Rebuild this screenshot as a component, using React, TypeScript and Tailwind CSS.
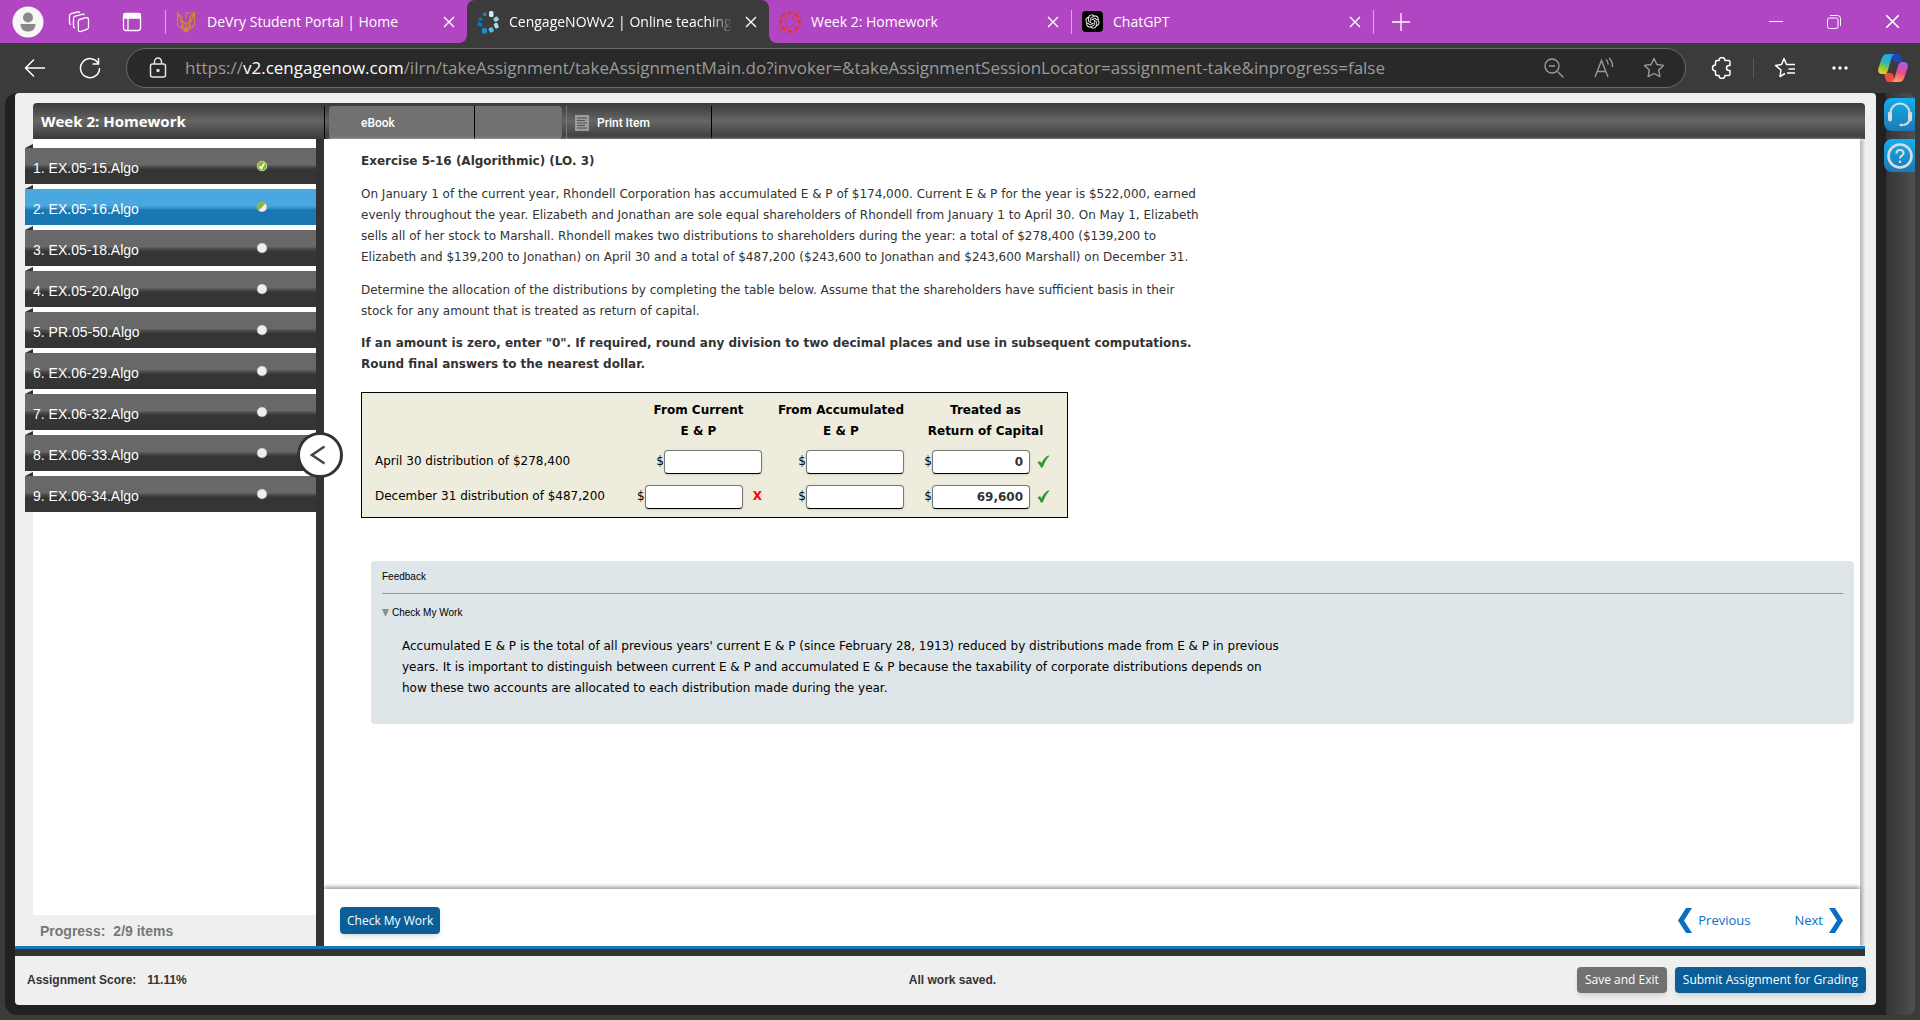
import { useState } from 'react'
import { RiOpenaiFill } from 'react-icons/ri'

const UI_FONT = "font-['Open_Sans','Noto_Sans',sans-serif]"
const ARIAL = "font-['Liberation_Sans',Arial,sans-serif]"
const VERDANA = "font-['DejaVu_Sans',Verdana,sans-serif]"

interface NavItem {
  label: string
  status: 'done' | 'partial' | 'none'
}

const items: NavItem[] = [
  { label: 'EX.05-15.Algo', status: 'done' },
  { label: 'EX.05-16.Algo', status: 'partial' },
  { label: 'EX.05-18.Algo', status: 'none' },
  { label: 'EX.05-20.Algo', status: 'none' },
  { label: 'PR.05-50.Algo', status: 'none' },
  { label: 'EX.06-29.Algo', status: 'none' },
  { label: 'EX.06-32.Algo', status: 'none' },
  { label: 'EX.06-33.Algo', status: 'none' },
  { label: 'EX.06-34.Algo', status: 'none' },
]

/* ---------- icons ---------- */

function CloseIcon({ size = 12 }: { size?: number }) {
  return (
    <svg width={size} height={size} viewBox="0 0 12 12" fill="none" stroke="currentColor" strokeWidth="1.4">
      <path d="M1 1l10 10M11 1L1 11" />
    </svg>
  )
}

function DevryIcon() {
  return (
    <svg width="20" height="22" viewBox="0 0 20 22" fill="none" stroke="#d08a2e" strokeWidth="1.2">
      <path d="M1.500 2v12l8.500 7 8.500-7V2L14 6v4l-4 3-4-3V6zM6 10v8M14 10v8M10 13v8M1.500 2l8.500 19M18.500 2L10 21M10 8V2h8.500" />
    </svg>
  )
}

function CengageIcon() {
  return (
    <svg width="22" height="24" viewBox="0 0 22 24">
      <rect x="12" y="1" width="4.500" height="6" rx="1.500" fill="#cfe9f5" />
      <rect x="16.500" y="7" width="5" height="4.500" rx="1.500" fill="#8fd0ea" transform="rotate(-35 19 9)" />
      <rect x="17" y="13" width="4" height="5.500" rx="1.500" fill="#a9dcee" transform="rotate(-20 19 15)" />
      <rect x="12" y="17.500" width="4.500" height="5" rx="1.500" fill="#5bb8e0" transform="rotate(-30 14 20)" />
      <rect x="5" y="18" width="5" height="5.500" rx="1.500" fill="#1b8fd0" />
      <rect x="0.500" y="12.500" width="5" height="4" rx="1.500" fill="#0f75b8" transform="rotate(25 3 14)" />
      <rect x="1.500" y="7.500" width="4" height="3.500" rx="1" fill="#1a6aa8" />
      <rect x="6" y="2.500" width="3.500" height="3.500" rx="1" fill="#2d7fb5" />
    </svg>
  )
}

function CanvasIcon() {
  const angles = [0, 45, 90, 135, 180, 225, 270, 315]
  return (
    <svg width="22" height="22" viewBox="-11 -11 22 22" fill="#e73429">
      {angles.map((a) => (
        <g key={a} transform={`rotate(${a})`}>
          <path d="M-3.200 -10.200A10.600 10.600 0 0 1 3.200 -10.200A3.300 3.300 0 0 1 -3.200 -10.200Z" />
          <circle cx="0" cy="-5.200" r="0.900" />
        </g>
      ))}
    </svg>
  )
}

function CopilotIcon() {
  return (
    <svg width="30" height="28" viewBox="0 0 30 28">
      <defs>
        <linearGradient id="cpA" x1="0.600" y1="0" x2="0.300" y2="1">
          <stop offset="0" stopColor="#1fa4f2" />
          <stop offset="0.400" stopColor="#2bb3b8" />
          <stop offset="0.700" stopColor="#8cc63f" />
          <stop offset="1" stopColor="#f5d01e" />
        </linearGradient>
        <linearGradient id="cpB" x1="0.600" y1="0" x2="0.400" y2="1">
          <stop offset="0" stopColor="#a35cf5" />
          <stop offset="0.500" stopColor="#ec4a8c" />
          <stop offset="1" stopColor="#ffa14a" />
        </linearGradient>
      </defs>
      <path d="M13 0h6c2 0 3 1 3.500 3l1.500 5h-6l-3-1z" fill="#1747c8" />
      <path d="M17 28h-6c-2 0-3-1-3.500-3L6 19h6l3 1z" fill="#f0503a" />
      <path d="M9 0h8c-2 0-3 2-3.500 4L10 16c-1 3-2 4-4 4H4c-3 0-4.500-2-3.500-6L3.500 5C4.500 2 6 0 9 0z" fill="url(#cpA)" />
      <path d="M21 28h-8c2 0 3-2 3.500-4L20 12c1-3 2-4 4-4h2c3 0 4.500 2 3.500 6l-3 9c-1 3-2.500 5-5.500 5z" fill="url(#cpB)" />
    </svg>
  )
}

function StatusIcon({ status }: { status: NavItem['status'] }) {
  return (
    <svg width="12" height="12" viewBox="0 0 12 12">
      <circle cx="6" cy="6" r="5" fill="#eee" stroke="#8a8a8a" strokeWidth="0.500" />
      {status === 'done' && (
        <>
          <circle cx="6" cy="6" r="4.700" fill="#86b82d" stroke="#c9dba4" strokeWidth="0.600" />
          <path d="M3.500 6.200l1.800 2.200 3-5" fill="none" stroke="#fff" strokeWidth="1.700" />
        </>
      )}
      {status === 'partial' && <path d="M2.600 9.400A4.800 4.800 0 0 1 9.400 2.600z" fill="#86b82d" />}
    </svg>
  )
}

function CheckMark() {
  return (
    <svg width="13" height="13" viewBox="0 0 13 13">
      <path d="M.500 7.500L3 6l1.500 2.200C6 5 8 2 11 .500l1.500.300C9.500 4 7.500 8 5.700 12.500H3.800C3 10.500 2 9 .500 7.500z" fill="#2e9a33" />
    </svg>
  )
}

/* ---------- browser chrome ---------- */

interface TabProps {
  title: string
  icon: React.ReactNode
  active?: boolean
  divider?: boolean
}

function BrowserTab({ title, icon, active, divider }: TabProps) {
  return (
    <div
      className={`relative flex h-[43px] w-[302px] min-w-0 items-center pl-2.5 pr-3 ${
        active ? 'rounded-t-lg bg-[#3b3b3b]' : ''
      }`}
    >
      {divider && <span className="absolute left-0 top-2.5 h-6 w-px bg-[#dba6e3]" />}
      <span className="flex w-[22px] shrink-0 justify-center">{icon}</span>
      <span
        className={`ml-2.5 flex-1 overflow-hidden whitespace-nowrap text-sm text-white ${
          active ? '[mask-image:linear-gradient(to_right,black_90%,transparent)]' : ''
        }`}
      >
        {title}
      </span>
      <button aria-label={`Close ${title}`} className="ml-3 shrink-0 text-white">
        <CloseIcon />
      </button>
      {active && (
        <>
          <span className="absolute bottom-0 -left-2 size-2 bg-[#3b3b3b]">
            <span className="block size-2 rounded-br-lg bg-[#b146c2]" />
          </span>
          <span className="absolute -right-2 bottom-0 size-2 bg-[#3b3b3b]">
            <span className="block size-2 rounded-bl-lg bg-[#b146c2]" />
          </span>
        </>
      )}
    </div>
  )
}

function TabStrip() {
  return (
    <div className="flex h-[43px] items-center bg-[#b146c2] text-white">
      <div className="flex w-[165px] shrink-0 items-center pl-3">
        <button aria-label="Profile">
          <svg width="32" height="32" viewBox="0 0 32 32">
            <circle cx="16" cy="16" r="15.500" fill="#f7f7f7" />
            <circle cx="16" cy="11.500" r="5" fill="#8a8a8a" />
            <path d="M8.500 18h15c0 5-3 7.500-7.500 7.500S8.500 23 8.500 18z" fill="#8a8a8a" />
          </svg>
        </button>
        <button aria-label="Workspaces" className="ml-6">
          <svg width="22" height="22" viewBox="0 0 22 22" fill="none" stroke="#fff" strokeWidth="1.300" strokeLinejoin="round">
            <path d="M11.500 8.500l6.500-1.800c1.500-.4 2.500.3 2.500 1.800v7.500c0 1.200-.5 2-1.700 2.400l-5.800 2c-1.500.5-2.700-.2-2.700-1.700v-8c0-1.200.3-1.900 1.200-2.200z" />
            <path d="M7 17c-1 0-1.500-.8-1.500-2V7.500c0-1.200.5-2 1.700-2.300L14 3.300c1.200-.3 2 .1 2.300.9" />
            <path d="M3 13.500c-1 0-1.500-.8-1.500-2V5c0-1.200.5-2 1.700-2.300L9.500 1c1.200-.3 2 .1 2.300.9" />
          </svg>
        </button>
        <button aria-label="Tab actions" className="ml-8">
          <svg width="20" height="20" viewBox="0 0 20 20" fill="none" stroke="#fff" strokeWidth="1.300">
            <rect x="1.500" y="1.500" width="17" height="17" rx="2.500" />
            <path d="M2 2h16v4H2z" fill="#fff" />
            <path d="M6 6v12" />
          </svg>
        </button>
      </div>
      <BrowserTab title="DeVry Student Portal | Home" icon={<DevryIcon />} divider />
      <BrowserTab title="CengageNOWv2 | Online teaching" icon={<CengageIcon />} active />
      <BrowserTab title="Week 2: Homework" icon={<CanvasIcon />} />
      <BrowserTab
        title="ChatGPT"
        divider
        icon={
          <span className="flex size-[21px] items-center justify-center rounded bg-black">
            <RiOpenaiFill size={17} />
          </span>
        }
      />
      <button aria-label="New tab" className="flex h-6 items-center border-l border-[#dba6e3] pl-4.5">
        <svg width="18" height="18" viewBox="0 0 18 18" stroke="#fff" strokeWidth="1.300">
          <path d="M9 0v18M0 9h18" />
        </svg>
      </button>
      <div className="ml-auto flex items-center gap-11 pr-5">
        <button aria-label="Minimize">
          <svg width="14" height="14" viewBox="0 0 14 14" stroke="#fff">
            <path d="M0 6.500h14" />
          </svg>
        </button>
        <button aria-label="Restore">
          <svg width="14" height="14" viewBox="0 0 14 14" fill="none" stroke="#fff">
            <rect x="0.500" y="3" width="10.500" height="10.500" rx="2" />
            <path d="M3 .500h7.500a3 3 0 0 1 3 3V11" />
          </svg>
        </button>
        <button aria-label="Close window">
          <CloseIcon size={15} />
        </button>
      </div>
    </div>
  )
}

function AddressBar() {
  return (
    <div className="flex h-[50px] items-center bg-[#3b3b3b] pl-6 pr-3 text-white">
      <button aria-label="Back">
        <svg width="22" height="20" viewBox="0 0 22 20" fill="none" stroke="#fff" strokeWidth="1.500">
          <path d="M10 1.500L1.500 10l8.500 8.500M1.500 10H21" />
        </svg>
      </button>
      <button aria-label="Refresh" className="ml-8">
        <svg width="24" height="22" viewBox="0 0 24 22" fill="none" stroke="#fff" strokeWidth="1.500">
          <path d="M20.300 6.500A9.500 9.500 0 1 0 21.500 11M20.500 1v6h-6" />
        </svg>
      </button>
      <div className="ml-6 flex h-10 min-w-0 flex-1 items-center rounded-full border border-[#6a6a6a] bg-[#292929] px-5">
        <svg width="22" height="22" viewBox="0 0 22 22" className="shrink-0" fill="none" stroke="#e4e4e4" strokeWidth="1.500">
          <rect x="3.500" y="7" width="15" height="13" rx="2" />
          <path d="M7.500 7V4.500a3.500 3.500 0 0 1 7 0V7" />
          <circle cx="11" cy="13.500" r="1" fill="#e4e4e4" />
        </svg>
        <span className="ml-4 flex-1 overflow-hidden whitespace-nowrap text-[17px] text-[#9a9a9a]">
          https://<span className="text-white">v2.cengagenow.com</span>
          /ilrn/takeAssignment/takeAssignmentMain.do?invoker=&amp;takeAssignmentSessionLocator=assignment-take&amp;inprogress=false
        </span>
        <div className="flex shrink-0 items-center gap-7">
          <button aria-label="Zoom out">
            <svg width="22" height="22" viewBox="0 0 22 22" fill="none" stroke="#9a9a9a" strokeWidth="1.400">
              <circle cx="9" cy="9" r="7" />
              <path d="M14.500 14.500l6 6M6 9h6" />
            </svg>
          </button>
          <button aria-label="Read aloud">
            <svg width="22" height="22" viewBox="0 0 22 22" fill="none" stroke="#9a9a9a" strokeWidth="1.400">
              <path d="M2 20L8.500 3.500 15 20M4.300 14.500h8.400M13 2.500c1.500 1.300 2.200 3 2.200 5M16 1c2.300 2 3.700 5 3.500 9" />
            </svg>
          </button>
          <button aria-label="Add to favorites">
            <svg width="22" height="22" viewBox="0 0 22 22" fill="none" stroke="#9a9a9a" strokeWidth="1.400" strokeLinejoin="round">
              <path d="M11 1.500l2.900 6 6.600.9-4.800 4.600 1.200 6.600L11 16.500l-5.900 3.100 1.200-6.600L1.500 8.400l6.600-.9z" />
            </svg>
          </button>
        </div>
      </div>
      <div className="flex shrink-0 items-center pl-[25px]">
        <button aria-label="Extensions">
          <svg width="22" height="22" viewBox="0 0 22 22" fill="none" stroke="#fff" strokeWidth="1.500" strokeLinejoin="round">
            <path d="M8 3.500a3 3 0 0 1 6 0h3.500c.8 0 1.500.7 1.500 1.500v3.500h-1a2.500 2.500 0 0 0 0 5h1V17c0 .8-.7 1.500-1.500 1.500H14a3 3 0 0 1-6 0H6c-.8 0-1.500-.7-1.500-1.500v-3a3 3 0 0 1 0-6V5c0-.8.7-1.500 1.500-1.500z" />
          </svg>
        </button>
        <span className="mx-5 h-5 w-px bg-[#5a5a5a]" />
        <button aria-label="Favorites">
          <svg width="22" height="22" viewBox="0 0 22 22" fill="none" stroke="#fff" strokeWidth="1.500" strokeLinejoin="round">
            <path d="M11 16.500l-5 3 1-6.500L1.500 8.400l6-.9L10 1.500l2.600 6H21M14.500 12H21M13 16h8" />
          </svg>
        </button>
        <button aria-label="Settings and more" className="ml-9">
          <svg width="16" height="4" viewBox="0 0 16 4" fill="#fff">
            <circle cx="2" cy="2" r="1.700" />
            <circle cx="8" cy="2" r="1.700" />
            <circle cx="14" cy="2" r="1.700" />
          </svg>
        </button>
        <button aria-label="Copilot" className="ml-[30px]">
          <CopilotIcon />
        </button>
      </div>
    </div>
  )
}

/* ---------- assignment page ---------- */

function AssignmentHeader() {
  return (
    <header className="flex h-9 items-stretch rounded-t bg-linear-to-b from-[#3a3a3a] via-[#666] to-[#3a3a3a] text-white">
      <h1 className={`w-[291px] shrink-0 pl-2 text-[15px] leading-9 font-bold ${UI_FONT}`}>Week 2: Homework</h1>
      <div className="mt-[3px] flex border-l border-black pl-1 font-['Roboto',sans-serif] text-xs font-medium">
        <div className="flex overflow-hidden rounded bg-[#717171] shadow">
          <button className="w-[146px] border-r border-black pr-6 pl-8 text-left">eBook</button>
          <span className="w-[87px]" />
        </div>
        <button className="ml-1 flex w-[146px] items-center gap-2 border-r border-l border-r-black border-l-[#777] pl-2">
          <svg width="14" height="16" viewBox="0 0 14 16">
            <rect width="14" height="16" fill="#9b9b9b" />
            <path d="M2 3h10M2 5.500h8M2 8h10M2 10.500h8M2 13h10" stroke="#555" />
          </svg>
          Print Item
        </button>
      </div>
    </header>
  )
}

function Sidebar() {
  const [selected, setSelected] = useState(1)

  return (
    <nav className="relative flex w-[291px] shrink-0 flex-col border-r-8 border-[#323232] bg-white">
      <ul className={`-ml-2 flex flex-col gap-[5px] pt-[9px] ${ARIAL}`}>
        {items.map((item, i) => (
          <li key={item.label} className="relative">
            <span className="absolute -top-1 left-0 h-1 w-2 bg-[#333] [clip-path:polygon(0_100%,100%_0,100%_100%)]" />
            <button
              onClick={() => setSelected(i)}
              className={`flex h-9 w-full items-center pl-2 text-sm text-white ${
                selected === i
                  ? 'bg-[linear-gradient(#49a8e0_0_46%,#2f8fca_54%,#1978b3_58%_100%)]'
                  : 'bg-[linear-gradient(#686868_0_46%,#4c4c4c_52%,#353535_60%_100%)]'
              }`}
            >
              <span className="flex-1 pt-1 text-left">
                {i + 1}. {item.label}
              </span>
              <span className="mr-12">
                <StatusIcon status={item.status} />
              </span>
            </button>
          </li>
        ))}
      </ul>
      <div className={`mt-auto flex h-[31px] items-center gap-2 bg-[#efefef] pl-[7px] text-sm font-bold text-[#777] ${ARIAL}`}>
        <span>Progress:</span>
        <span>2/9 items</span>
      </div>
      <button
        aria-label="Collapse navigation"
        className="absolute top-[293px] -right-[27px] z-10 flex size-[46px] items-center justify-center rounded-full border-3 border-[#333] bg-white"
      >
        <svg width="16" height="20" viewBox="0 0 16 20" className="mr-1" fill="none" stroke="#444" strokeWidth="2.500">
          <path d="M14.500 1.500L2 10l12.500 8.500" />
        </svg>
      </button>
    </nav>
  )
}

interface AmountProps {
  label: string
  value?: string
  mark?: 'ok' | 'bad'
}

function Amount({ label, value = '', mark }: AmountProps) {
  return (
    <div className="flex items-center justify-end">
      <span>$</span>
      <input
        aria-label={label}
        defaultValue={value}
        className="h-6 w-[98px] rounded border border-[#767676] border-b-black bg-white px-1.5 text-right text-xs font-bold text-[#333] shadow-sm"
      />
      {mark && (
        <span className="flex w-5 justify-end font-bold text-[#f00]">{mark === 'ok' ? <CheckMark /> : 'X'}</span>
      )}
    </div>
  )
}

function DistributionTable() {
  return (
    <div className="mt-[17px] w-fit border border-black bg-[#eeecdc] pb-[3px] text-black">
      <table className="w-[705px] table-fixed">
        <colgroup>
          <col className="w-[267px]" />
          <col className="w-[141px]" />
          <col className="w-[142px]" />
          <col className="w-[155px]" />
        </colgroup>
        <thead>
          <tr className="h-[51px] align-top">
            <td />
            <th className="pt-[7px] pr-2.5 pl-2">From Current<br />E &amp; P</th>
            <th className="pt-[7px]">From Accumulated<br />E &amp; P</th>
            <th className="pt-[7px] pr-2">Treated as<br />Return of Capital</th>
          </tr>
        </thead>
        <tbody>
          <tr className="h-[35px]">
            <th scope="row" className="pl-[13px] text-left font-normal">April 30 distribution of $278,400</th>
            <td className="px-2"><Amount label="April 30 from current E & P" /></td>
            <td className="px-2"><Amount label="April 30 from accumulated E & P" /></td>
            <td className="pr-[17px]"><Amount label="April 30 return of capital" value="0" mark="ok" /></td>
          </tr>
          <tr className="h-[35px]">
            <th scope="row" className="pl-[13px] text-left font-normal">December 31 distribution of $487,200</th>
            <td className="px-2"><Amount label="December 31 from current E & P" mark="bad" /></td>
            <td className="px-2"><Amount label="December 31 from accumulated E & P" /></td>
            <td className="pr-[17px]"><Amount label="December 31 return of capital" value="69,600" mark="ok" /></td>
          </tr>
        </tbody>
      </table>
    </div>
  )
}

function Feedback() {
  const [open, setOpen] = useState(true)

  return (
    <section className="mt-[43px] mr-1.5 ml-[47px] min-h-[163px] rounded bg-[#dee6e9] px-[11px] pt-[9px] text-black">
      <h3 className={`border-b border-[#8f9a9e] pb-[9px] text-[10px] leading-[14px] ${ARIAL}`}>Feedback</h3>
      <button
        onClick={() => setOpen(!open)}
        className={`mt-3 flex items-center gap-[3px] text-[10px] leading-[14px] ${ARIAL}`}
      >
        <svg width="7" height="8" viewBox="0 0 7 8" fill="#8f8f8f">
          <path d="M0 0h7L4 7H3z" />
        </svg>
        Check My Work
      </button>
      {open && (
        <p className="mt-4 pl-5">
          Accumulated E &amp; P is the total of all previous years' current E &amp; P (since February 28, 1913) reduced by distributions made from E &amp; P in previous<br />
          years. It is important to distinguish between current E &amp; P and accumulated E &amp; P because the taxability of corporate distributions depends on<br />
          how these two accounts are allocated to each distribution made during the year.
        </p>
      )}
    </section>
  )
}

function Exercise() {
  return (
    <main className="mr-[5px] flex min-w-0 flex-1 flex-col bg-white shadow-[3px_0_3px_#bbb]">
      <div className={`flex-1 text-xs leading-[21px] text-[#333] ${VERDANA}`}>
        <div className="pt-3 pl-[37px]">
          <h2 className="font-bold">Exercise 5-16 (Algorithmic) (LO. 3)</h2>
          <p className="mt-3">
            On January 1 of the current year, Rhondell Corporation has accumulated E &amp; P of $174,000. Current E &amp; P for the year is $522,000, earned<br />
            evenly throughout the year. Elizabeth and Jonathan are sole equal shareholders of Rhondell from January 1 to April 30. On May 1, Elizabeth<br />
            sells all of her stock to Marshall. Rhondell makes two distributions to shareholders during the year: a total of $278,400 ($139,200 to<br />
            Elizabeth and $139,200 to Jonathan) on April 30 and a total of $487,200 ($243,600 to Jonathan and $243,600 Marshall) on December 31.
          </p>
          <p className="mt-3">
            Determine the allocation of the distributions by completing the table below. Assume that the shareholders have sufficient basis in their<br />
            stock for any amount that is treated as return of capital.
          </p>
          <p className="mt-[11px] font-bold">
            If an amount is zero, enter "0". If required, round any division to two decimal places and use in subsequent computations.<br />
            Round final answers to the nearest dollar.
          </p>
          <DistributionTable />
        </div>
        <Feedback />
      </div>
      <div className={`flex h-[57px] items-center bg-white pt-1.5 pr-[17px] pl-4 shadow-[0_-2px_4px_#999] ${UI_FONT}`}>
        <button className="h-[27px] rounded bg-[#0a5f9a] px-[7px] text-xs font-medium text-white shadow-md">Check My Work</button>
        <a href="#previous" className="ml-auto flex items-center gap-1.5 text-[13px] text-[#0a6fc2]">
          <svg width="14" height="25" viewBox="0 0 14 25" fill="#0a6fc2">
            <path d="M8 0h6L6 12.500 14 25H8L0 12.500z" />
          </svg>
          Previous
        </a>
        <a href="#next" className="ml-11 flex items-center gap-1.5 text-[13px] text-[#0a6fc2]">
          Next
          <svg width="14" height="25" viewBox="0 0 14 25" fill="#0a6fc2">
            <path d="M6 0H0l8 12.500L0 25h6l8-12.500z" />
          </svg>
        </a>
      </div>
    </main>
  )
}

function Footer() {
  return (
    <footer className={`grid h-[49px] grid-cols-3 items-center pr-2.5 pb-0.5 pl-3 text-xs font-bold text-[#333] ${ARIAL}`}>
      <div className="flex gap-[11px]">
        <span>Assignment Score:</span>
        <span>11.11%</span>
      </div>
      <div className="pl-3 text-center">All work saved.</div>
      <div className={`flex justify-end gap-2 font-normal text-white ${UI_FONT}`}>
        <button className="h-[26px] rounded bg-[#717171] px-2 shadow-md">Save and Exit</button>
        <button className="h-[26px] rounded bg-[#0a5f9a] px-2 shadow-md">Submit Assignment for Grading</button>
      </div>
    </footer>
  )
}

function SideRail() {
  const tile = 'flex h-[33px] w-[31px] items-center justify-center rounded-l-lg bg-linear-to-b from-[#12aeea] to-[#1b79b6]'
  return (
    <aside className="flex w-[29px] shrink-0 flex-col items-end gap-2 rounded-r-lg bg-linear-to-r from-[#343434] to-[#505050] pt-[5px]">
      <button aria-label="Support" className={tile}>
        <svg width="26" height="26" viewBox="0 0 26 26" fill="none" stroke="#d5dde2" strokeWidth="2">
          <path d="M3.500 14V11a9.500 9.500 0 0 1 19 0v6c0 3-2 5-6 6" />
          <path d="M3 11.500v6M23 11.500v6" strokeWidth="4" strokeLinecap="round" />
          <ellipse cx="14.500" cy="23" rx="2.200" ry="1.200" fill="#d5dde2" stroke="none" />
        </svg>
      </button>
      <button aria-label="Help" className={tile}>
        <svg width="28" height="28" viewBox="0 0 28 28" fill="none" stroke="#d5dde2" strokeWidth="2.600">
          <circle cx="14" cy="14" r="11.500" />
          <path d="M10.500 11.500c0-2.200 1.500-3.500 3.500-3.500s3.500 1.300 3.500 3.200c0 2.500-3.500 2.600-3.500 5.300M14 18.500v2.500" strokeWidth="2.200" />
        </svg>
      </button>
    </aside>
  )
}

export default function App() {
  return (
    <div className={`flex min-h-screen flex-col bg-[#3b3b3b] ${UI_FONT}`}>
      <TabStrip />
      <AddressBar />
      <div className="flex flex-1 px-[5px] pb-[5px]">
        <div className="flex min-w-0 flex-1 rounded-l-xl bg-[#212121] px-2.5 pb-2.5">
          <div className="flex min-w-0 flex-1 flex-col rounded-sm bg-[#efefef] pt-2.5">
            <div className="mr-[11px] ml-[18px]">
              <AssignmentHeader />
            </div>
            <div className="mr-[11px] ml-[18px] flex flex-1">
              <Sidebar />
              <Exercise />
            </div>
            <div className="relative mr-[11px] h-2.5 border-t-3 border-[#1978b3] bg-[#333]" />
            <Footer />
          </div>
        </div>
        <SideRail />
      </div>
    </div>
  )
}
